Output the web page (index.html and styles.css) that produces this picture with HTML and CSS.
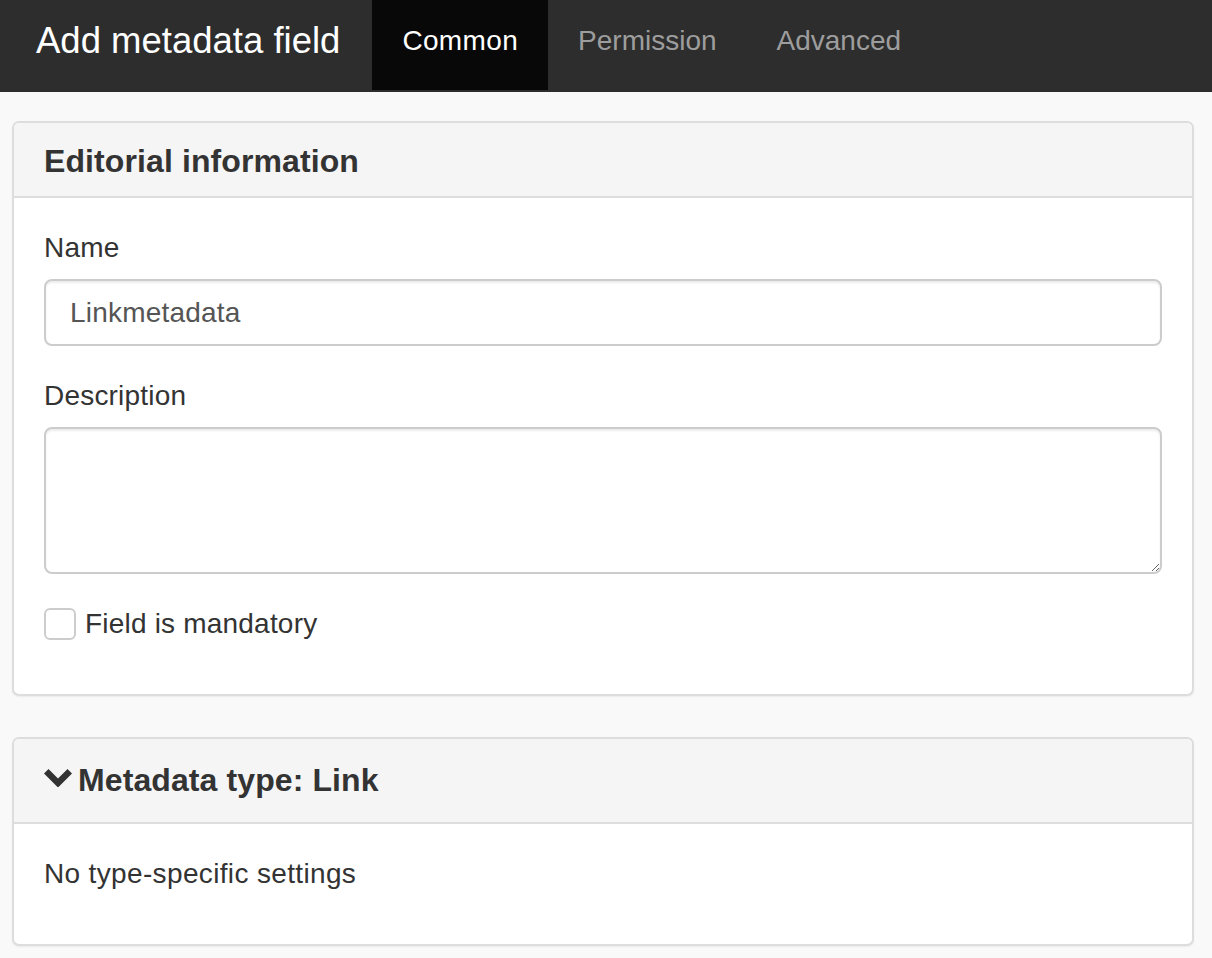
FILE: index.html
```html
<!DOCTYPE html>
<html lang="en">
<head>
<meta charset="utf-8">
<title>Add metadata field</title>
<link rel="stylesheet" href="styles.css">
</head>
<body>
<header class="topbar">
  <div class="brand">Add metadata field</div>
  <nav class="tabs">
    <a class="tab active">Common</a>
    <a class="tab">Permission</a>
    <a class="tab">Advanced</a>
  </nav>
</header>
<main class="content">
  <section class="panel">
    <div class="panel-heading first">
      <h3 class="panel-title">Editorial information</h3>
    </div>
    <div class="panel-body">
      <div class="form-group">
        <label class="field-label">Name</label>
        <input class="form-control" type="text" value="Linkmetadata">
      </div>
      <div class="form-group">
        <label class="field-label">Description</label>
        <textarea class="form-control textarea"></textarea>
      </div>
      <label class="checkbox-row">
        <input class="check" type="checkbox">
        <span>Field is mandatory</span>
      </label>
    </div>
  </section>
  <section class="panel">
    <div class="panel-heading second">
      <h3 class="panel-title"><svg class="chevron" width="28" height="18" viewBox="0 0 28 18"><polygon points="0,4.5 4.5,0 14,9.5 23.5,0 28,4.5 14,18.5" fill="#333"/></svg>Metadata type: Link</h3>
    </div>
    <div class="panel-body">
      <p class="note">No type-specific settings</p>
    </div>
  </section>
</main>
</body>
</html>
```

FILE: styles.css
```css
* { box-sizing: border-box; }

html, body {
  margin: 0;
  padding: 0;
}

body {
  background: #f9f9f9;
  font-family: "Liberation Sans", Arial, Helvetica, sans-serif;
  color: #333;
  font-size: 28px;
  line-height: 40px;
}

.topbar {
  display: flex;
  align-items: flex-start;
  height: 92px;
  background: #2d2d2d;
  padding-left: 36px;
}

.brand {
  color: #fff;
  font-size: 36.5px;
  line-height: 40px;
  padding-top: 21px;
  margin-right: 32px;
}

.tabs {
  display: flex;
}

.tab {
  display: block;
  height: 90px;
  padding: 21px 30px 29px;
  line-height: 40px;
  font-size: 28px;
  color: #9d9d9d;
  text-decoration: none;
}

.tab.active {
  background: #080808;
  color: #fff;
  letter-spacing: 0.35px;
}

.content {
  padding: 29px 18px 0 12px;
}

.panel {
  background: #fff;
  border: 2px solid #ddd;
  border-radius: 7px;
  box-shadow: 0 1px 2px rgba(0, 0, 0, 0.06);
  margin-bottom: 41px;
  overflow: hidden;
}

.panel-heading {
  background: #f5f5f5;
  border-bottom: 2px solid #ddd;
  padding: 21px 30px 17px;
}

.panel-heading.second {
  padding: 24px 30px 24px;
}

.panel-title {
  margin: 0;
  font-size: 32px;
  line-height: 35px;
  font-weight: 700;
  color: #333;
  letter-spacing: 0.1px;
}

.chevron {
  display: inline-block;
  vertical-align: 4px;
  margin-right: 6px;
}

.panel-body {
  padding: 30px;
}

.form-group {
  margin-bottom: 30px;
}

.field-label {
  display: block;
  margin-bottom: 11px;
  font-size: 28px;
  line-height: 40px;
  letter-spacing: 0.2px;
}

.form-control {
  display: block;
  width: 100%;
  height: 67px;
  padding: 0 24px;
  font-family: inherit;
  font-size: 28px;
  letter-spacing: 0.2px;
  color: #555;
  background: #fff;
  border: 2px solid #ccc;
  border-radius: 8px;
  box-shadow: inset 0 2px 2px rgba(0, 0, 0, 0.075);
  outline: none;
}

.textarea {
  height: 147px;
  padding: 12px 24px;
  resize: vertical;
}

.checkbox-row {
  display: flex;
  align-items: center;
  height: 40px;
  margin-bottom: 20px;
  letter-spacing: 0.2px;
}

.check {
  -webkit-appearance: none;
  appearance: none;
  width: 32px;
  height: 32px;
  margin: 0 9px 0 0;
  border: 2px solid #ccc;
  border-radius: 6px;
  background: #fff;
}

.note {
  margin: 0 0 20px;
  font-size: 28px;
  line-height: 40px;
  letter-spacing: 0.35px;
}
```
